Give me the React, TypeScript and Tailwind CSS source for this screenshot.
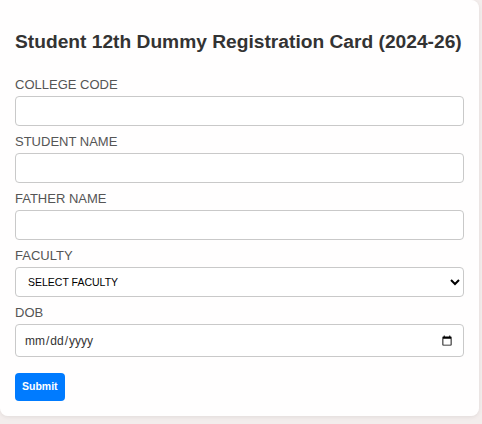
import { useState } from 'react';

const faculties = ['SELECT FACULTY', 'ARTS', 'SCIENCE', 'COMMERCE'];

function Field({ label, children }: { label: string; children: React.ReactNode }) {
  return (
    <div className="mb-[8px]">
      <label className="mb-[3px] block text-[13px] leading-[16px] text-[#555]">{label}</label>
      {children}
    </div>
  );
}

const inputCls =
  'block h-[30px] w-full rounded-[4px] border border-[#c9c9c9] bg-white px-2 text-[13px] text-[#333] outline-none';

export default function App() {
  const [faculty, setFaculty] = useState(faculties[0]);

  return (
    <div
      className="min-h-[424px] w-[482px] overflow-hidden bg-[#f3edec]"
      style={{ fontFamily: '"Liberation Sans", Arial, sans-serif' }}
    >
      <div className="w-[479px] rounded-b-[8px] rounded-tr-[8px] bg-white/95 px-[15px] pb-[15px] pt-[15px] shadow-[0_1px_4px_rgba(0,0,0,0.08)]">
        <h2 className="mb-[24px] mt-[16px] text-[19.2px] font-bold leading-[22px] text-[#333]">
          Student 12th Dummy Registration Card (2024-26)
        </h2>

        <form onSubmit={(e) => e.preventDefault()}>
          <Field label="COLLEGE CODE">
            <input type="text" className={inputCls} />
          </Field>
          <Field label="STUDENT NAME">
            <input type="text" className={inputCls} />
          </Field>
          <Field label="FATHER NAME">
            <input type="text" className={inputCls} />
          </Field>
          <Field label="FACULTY">
            <select
              value={faculty}
              onChange={(e) => setFaculty(e.target.value)}
              className="block h-[30px] w-full rounded-[4px] border border-[#c9c9c9] bg-white pl-[8px] pr-1 text-[10.5px] text-black outline-none"
            >
              {faculties.map((f) => (
                <option key={f} value={f}>
                  {f}
                </option>
              ))}
            </select>
          </Field>
          <div className="mb-[16px]">
            <label className="mb-[3px] block text-[13px] leading-[16px] text-[#555]">DOB</label>
            <input
              type="date"
              className="block h-[33px] w-full rounded-[4px] border border-[#c9c9c9] bg-white px-[8px] text-[12px] text-[#333] outline-none"
            />
          </div>
          <button
            type="submit"
            className="h-[28px] rounded-[4px] bg-[#007bff] px-[7px] text-[10.5px] font-bold text-white"
          >
            Submit
          </button>
        </form>
      </div>
    </div>
  );
}
